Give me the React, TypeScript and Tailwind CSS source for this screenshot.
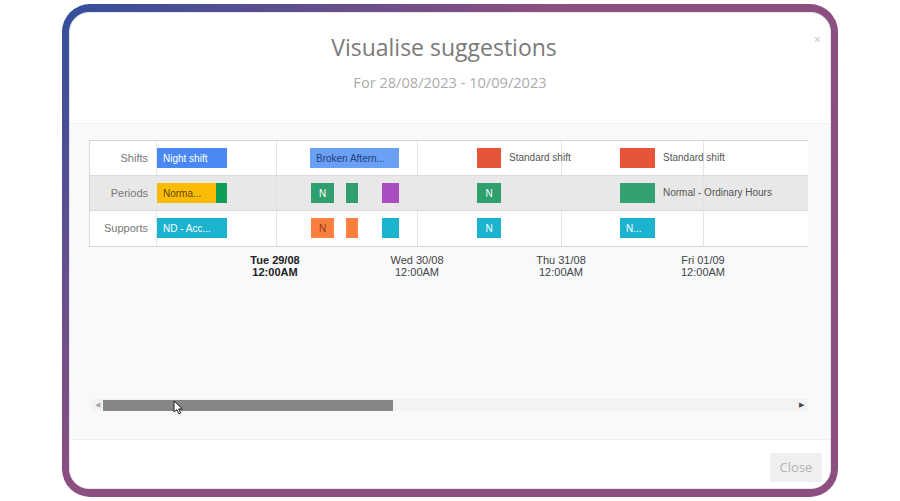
import React from 'react';

type Bar = {
  left: number;
  width: number;
  color: string;
  label?: string;
  text?: string;
  after?: string;
};

const rows: { name: string; bg: string; bars: Bar[] }[] = [
  {
    name: 'Shifts',
    bg: 'bg-white',
    bars: [
      { left: 0, width: 70, color: 'bg-[#4a89f3]', label: 'Night shift', text: 'text-white' },
      { left: 153, width: 89, color: 'bg-[#6aa0f5]', label: 'Broken Aftern...', text: 'text-[#23407a]' },
      { left: 320, width: 24, color: 'bg-[#e6553a]', after: 'Standard shift' },
      { left: 463, width: 35, color: 'bg-[#e6553a]', after: 'Standard shift' },
    ],
  },
  {
    name: 'Periods',
    bg: 'bg-[#e8e8e8]',
    bars: [
      { left: 0, width: 59, color: 'bg-[#fbbc05]', label: 'Norma...', text: 'text-[#5c4a00]' },
      { left: 59, width: 11, color: 'bg-[#109d58]' },
      { left: 154, width: 23, color: 'bg-[#2f9f6d]', label: 'N', text: 'text-white' },
      { left: 189, width: 12, color: 'bg-[#2f9f6d]' },
      { left: 225, width: 17, color: 'bg-[#a94dc0]' },
      { left: 320, width: 24, color: 'bg-[#2f9f6d]', label: 'N', text: 'text-white' },
      { left: 463, width: 35, color: 'bg-[#34a270]', after: 'Normal - Ordinary Hours' },
    ],
  },
  {
    name: 'Supports',
    bg: 'bg-white',
    bars: [
      { left: 0, width: 70, color: 'bg-[#1cb3cf]', label: 'ND - Acc...', text: 'text-white' },
      { left: 154, width: 23, color: 'bg-[#ff7f40]', label: 'N', text: 'text-[#8a3a1a]' },
      { left: 189, width: 12, color: 'bg-[#ff7f40]' },
      { left: 225, width: 17, color: 'bg-[#1cb3cf]' },
      { left: 320, width: 24, color: 'bg-[#1cb3cf]', label: 'N', text: 'text-white' },
      { left: 463, width: 35, color: 'bg-[#1cb3cf]', label: 'N...', text: 'text-white' },
    ],
  },
];

const gridLines = [119, 260, 404, 546];

const ticks = [
  { x: 118, day: 'Tue 29/08', bold: true },
  { x: 260, day: 'Wed 30/08', bold: false },
  { x: 404, day: 'Thu 31/08', bold: false },
  { x: 546, day: 'Fri 01/09', bold: false },
];

const App = () => {
  return (
    <div className="w-[900px] h-[501px] bg-white pt-[4px] pl-[62px]">
      <div className="w-[776px] h-[493px] rounded-[28px] px-[7px] py-[8px] bg-[linear-gradient(135deg,#334f9c_0%,#8b4f80_38%,#8c4f7f_100%)]">
        <div className="relative w-full h-full bg-white rounded-[20px] overflow-hidden flex flex-col border border-[#e6e6ea]">
          {/* header */}
          <div className="h-[110px] shrink-0 pt-[19px] text-center font-['Open_Sans',sans-serif]">
            <h2 className="pr-[12px] text-[23px] leading-[30px] text-[#7a7a7a]">Visualise suggestions</h2>
            <p className="mt-[10px] text-[14.6px] leading-[20px] text-[#ababab]">For 28/08/2023 - 10/09/2023</p>
            <span className="absolute right-[9px] top-[20px] text-[13px] leading-none text-[#c8c8c8]">×</span>
          </div>

          {/* body */}
          <div className="h-[316px] shrink-0 bg-[#f8f9fb] border-t border-[#eeeff2] pt-[16px] pl-[19px] font-['Liberation_Sans',Arial,sans-serif]">
            <div className="w-[719px] border-y border-l border-[#d6d6d6] bg-white">
              {rows.map((row, i) => (
                <div
                  key={row.name}
                  className={`flex h-[35px] ${row.bg} ${i < rows.length - 1 ? 'border-b border-[#d9d9d9]' : ''}`}
                >
                  <div className="w-[67px] shrink-0 border-r border-[#e6e6e6] flex items-center justify-end pr-[8px] text-[11px] text-[#777]">
                    {row.name}
                  </div>
                  <div className="relative flex-1">
                    {gridLines.map((x) => (
                      <div key={x} className="absolute top-0 bottom-0 w-px bg-[#e4e4e4]" style={{ left: x }} />
                    ))}
                    {row.bars.map((b, j) => (
                      <React.Fragment key={j}>
                        <div
                          className={`absolute top-[7px] h-[20px] ${b.color} flex items-center overflow-hidden whitespace-nowrap text-[10px] ${b.text ?? ''} ${b.label && b.width < 30 ? 'justify-center' : 'pl-[6px]'}`}
                          style={{ left: b.left, width: b.width }}
                        >
                          {b.label}
                        </div>
                        {b.after && (
                          <span
                            className="absolute top-[10px] text-[10px] leading-[14px] text-[#555] whitespace-nowrap"
                            style={{ left: b.left + b.width + 8 }}
                          >
                            {b.after}
                          </span>
                        )}
                      </React.Fragment>
                    ))}
                  </div>
                </div>
              ))}
            </div>

            {/* axis */}
            <div className="relative h-[152px] ml-[68px]">
              {ticks.map((t) => (
                <div
                  key={t.day}
                  className={`absolute top-[7px] -translate-x-1/2 text-center text-[11px] leading-[12px] whitespace-nowrap ${t.bold ? 'font-bold text-[#222]' : 'text-[#444]'}`}
                  style={{ left: t.x }}
                >
                  <div>{t.day}</div>
                  <div>12:00AM</div>
                </div>
              ))}
            </div>

            {/* scrollbar */}
            <div className="relative ml-[2px] w-[717px] h-[12px] bg-[#f3f3f3] flex items-center">
              <div className="w-[12px] h-[12px] flex items-center justify-center text-[7px] text-[#aaa]">◀</div>
              <div className="w-[290px] h-[11px] bg-[#868686]" />
              <div className="ml-auto w-[14px] flex items-center justify-center text-[7px] text-[#444]">▶</div>
              <svg className="absolute left-[82px] top-[1px]" width="11" height="15" viewBox="0 0 11 15">
                <path d="M1 1 L1 12 L3.8 9.5 L5.8 13.8 L7.6 13 L5.7 8.9 L9.4 8.9 Z" fill="#fff" stroke="#222" strokeWidth="1" strokeLinejoin="round" />
              </svg>
            </div>
          </div>

          {/* footer */}
          <div className="flex-1 bg-white border-t border-[#eeeeee] flex justify-end items-start pt-[13px] pr-[8px] font-['Open_Sans',sans-serif]">
            <button className="w-[52px] h-[29px] bg-[#efefef] rounded-[2px] text-[13px] text-[#b3b3b3]">Close</button>
          </div>
        </div>
      </div>
    </div>
  );
};

export default App;
